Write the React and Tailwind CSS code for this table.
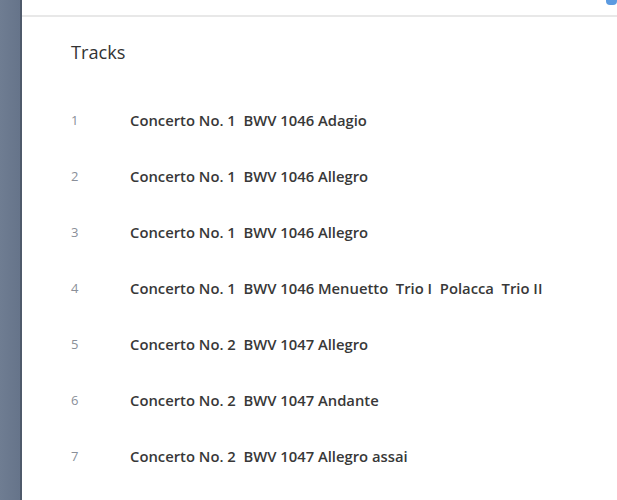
export default function App() {
  const tracks = [
    "Concerto No. 1  BWV 1046 Adagio",
    "Concerto No. 1  BWV 1046 Allegro",
    "Concerto No. 1  BWV 1046 Allegro",
    "Concerto No. 1  BWV 1046 Menuetto  Trio I  Polacca  Trio II",
    "Concerto No. 2  BWV 1047 Allegro",
    "Concerto No. 2  BWV 1047 Andante",
    "Concerto No. 2  BWV 1047 Allegro assai",
  ];
  return (
    <div className="flex h-[500px] w-[617px] overflow-hidden bg-white" style={{ fontFamily: '"Open Sans", sans-serif' }}>
      <div className="w-[20px] shrink-0 bg-gradient-to-r from-[#6f7d92] to-[#66748a]" />
      <div className="w-[2px] shrink-0 bg-[#4f5a6b]" />
      <div className="flex flex-1 flex-col">
        <div className="relative h-[17px] shrink-0 border-b-2 border-[#e8e8e8]">
          <div className="absolute right-0 top-[-6px] h-[11px] w-[11px] rounded-[4px] bg-[#5b9ae0]" />
        </div>
        <div className="pl-[49px] pt-[21px]">
          <h2 className="text-[18.2px] leading-[28px] text-[#333]">Tracks</h2>
          <ul className="mt-[26px]">
            {tracks.map((t, i) => (
              <li key={i} className="flex h-[56px] items-center">
                <span className="w-[59px] text-[13px] leading-[20px] text-[#8a8f99]">{i + 1}</span>
                <span className="whitespace-pre text-[14.8px] leading-[20px] font-semibold text-[#383838]">{t}</span>
              </li>
            ))}
          </ul>
        </div>
      </div>
    </div>
  );
}
